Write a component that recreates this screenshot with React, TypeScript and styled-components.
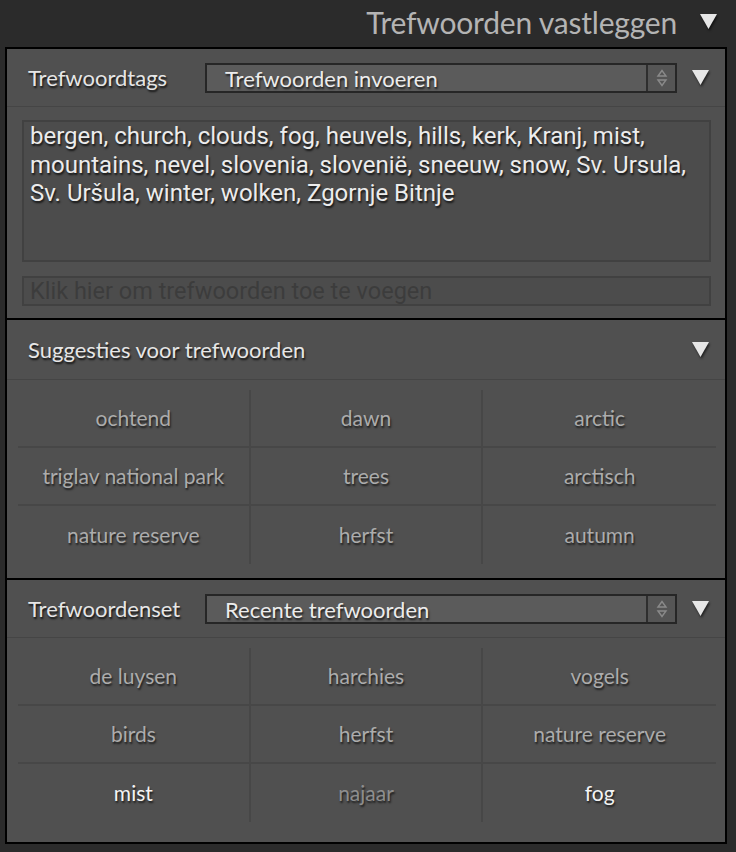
import React from 'react';
import styled, { createGlobalStyle } from 'styled-components';

const GlobalStyle = createGlobalStyle`
  html, body {
    margin: 0;
    padding: 0;
    background: #2b2b2b;
  }
  body {
    font-family: Lato, 'Open Sans', sans-serif;
  }
`;

const Page = styled.div`
  width: 736px;
  min-height: 852px;
  background: #2b2b2b;
  display: flex;
  flex-direction: column;
`;

const TopBar = styled.div`
  flex: none;
  height: 47px;
  display: flex;
  align-items: center;
  justify-content: flex-end;
  gap: 22px;
  padding: 0 18px 4px 0;
  box-sizing: border-box;
`;

const TopTitle = styled.span`
  font-size: 30px;
  color: #b4b4b4;
  letter-spacing: -0.2px;
`;

const Panel = styled.div`
  flex: none;
  margin: 0 9px 0 5px;
  border: 2px solid #000;
  background: #505050;
  display: flex;
  flex-direction: column;
`;

const Section = styled.div<{ $last?: boolean }>`
  border-bottom: ${({ $last }) => ($last ? 'none' : '2px solid #000')};
  display: flex;
  flex-direction: column;
`;

const SectionHeader = styled.div<{ $h: number }>`
  height: ${({ $h }) => $h}px;
  display: flex;
  align-items: center;
  padding: 0 15px 0 21px;
  border-bottom: 1px solid #454545;
  box-sizing: border-box;
`;

const Label = styled.span<{ $w?: number }>`
  font-size: 22px;
  color: #e6e6e6;
  text-shadow: 1px 2px 2px rgba(0, 0, 0, 0.8);
  width: ${({ $w }) => ($w ? `${$w}px` : 'auto')};
  flex: ${({ $w }) => ($w ? 'none' : '1')};
`;

const Select = styled.div`
  flex: 1;
  height: 30px;
  display: flex;
  border: 2px solid #262626;
  background: #5b5b5b;
  box-sizing: border-box;
  margin-right: 14px;
`;

const SelectText = styled.span`
  flex: 1;
  padding-left: 18px;
  font-size: 22px;
  line-height: 28px;
  color: #ececec;
  text-shadow: 1px 2px 2px rgba(0, 0, 0, 0.7);
`;

const Stepper = styled.div`
  width: 27px;
  border-left: 2px solid #2e2e2e;
  background: #555;
  display: flex;
  align-items: center;
  justify-content: center;
`;

const Triangle = styled.svg`
  width: 19px;
  height: 17px;
  flex: none;
  filter: drop-shadow(1px 2px 1px rgba(0, 0, 0, 0.6));
`;

const Body = styled.div`
  padding: 13px 14px 12px 15px;
  display: flex;
  flex-direction: column;
  gap: 14px;
`;

const TagBox = styled.div`
  height: 142px;
  box-sizing: border-box;
  border: 2px solid #414141;
  background: #4c4c4c;
  padding: 0 6px;
  font-family: Roboto, 'Noto Sans', sans-serif;
  font-size: 24px;
  line-height: 28.5px;
  color: #ececec;
  text-shadow: 1px 2px 2px rgba(0, 0, 0, 0.75);
`;

const AddInput = styled.div`
  height: 30px;
  box-sizing: border-box;
  border: 2px solid #414141;
  background: #4c4c4c;
  padding: 0 6px;
  font-family: Roboto, 'Noto Sans', sans-serif;
  font-size: 23.5px;
  line-height: 27px;
  color: #3c3c3c;
  white-space: nowrap;
  overflow: hidden;
`;

const Grid = styled.div<{ $pad: string }>`
  display: grid;
  grid-template-columns: repeat(3, 1fr);
  padding: ${({ $pad }) => $pad};
`;

const Cell = styled.div<{ $col: number; $row: number; $tone: 'dim' | 'normal' | 'bright' }>`
  height: 58px;
  box-sizing: border-box;
  display: flex;
  align-items: center;
  justify-content: center;
  font-size: 21px;
  color: ${({ $tone }) => ($tone === 'bright' ? '#f4f4f4' : $tone === 'dim' ? '#8e8e8e' : '#acacac')};
  text-shadow: 1px 2px 2px rgba(0, 0, 0, 0.65);
  border-right: ${({ $col }) => ($col < 2 ? '2px solid #474747' : 'none')};
  border-bottom: ${({ $row }) => ($row < 2 ? '2px solid #474747' : 'none')};
  padding-bottom: 2px;
`;

const DownTriangle = () => (
  <Triangle viewBox="0 0 19 17">
    <path d="M1 1 L18 1 L9.5 16 Z" fill="#e6e6e6" />
  </Triangle>
);

const StepIcon = () => (
  <svg width="12" height="20" viewBox="0 0 12 20">
    <path d="M2 8 L6 2.5 L10 8 Z" fill="none" stroke="#8a8a8a" strokeWidth="1.4" />
    <path d="M2 12 L6 17.5 L10 12 Z" fill="none" stroke="#8a8a8a" strokeWidth="1.4" />
  </svg>
);

type Tone = 'dim' | 'normal' | 'bright';

const suggestions: [string, Tone][] = [
  ['ochtend', 'normal'],
  ['dawn', 'normal'],
  ['arctic', 'normal'],
  ['triglav national park', 'normal'],
  ['trees', 'normal'],
  ['arctisch', 'normal'],
  ['nature reserve', 'normal'],
  ['herfst', 'normal'],
  ['autumn', 'normal'],
];

const recent: [string, Tone][] = [
  ['de luysen', 'normal'],
  ['harchies', 'normal'],
  ['vogels', 'normal'],
  ['birds', 'normal'],
  ['herfst', 'normal'],
  ['nature reserve', 'normal'],
  ['mist', 'bright'],
  ['najaar', 'dim'],
  ['fog', 'bright'],
];

const KeywordGrid = ({ items, pad }: { items: [string, Tone][]; pad: string }) => (
  <Grid $pad={pad}>
    {items.map(([word, tone], i) => (
      <Cell key={i} $col={i % 3} $row={Math.floor(i / 3)} $tone={tone}>
        {word}
      </Cell>
    ))}
  </Grid>
);

export default function App() {
  return (
    <Page>
      <GlobalStyle />
      <TopBar>
        <TopTitle>Trefwoorden vastleggen</TopTitle>
        <DownTriangle />
      </TopBar>
      <Panel>
        <Section>
          <SectionHeader $h={58}>
            <Label $w={177}>Trefwoordtags</Label>
            <Select>
              <SelectText>Trefwoorden invoeren</SelectText>
              <Stepper>
                <StepIcon />
              </Stepper>
            </Select>
            <DownTriangle />
          </SectionHeader>
          <Body>
            <TagBox>
              bergen, church, clouds, fog, heuvels, hills, kerk, Kranj, mist, mountains, nevel, slovenia,
              slovenië, sneeuw, snow, Sv. Ursula, Sv. Uršula, winter, wolken, Zgornje Bitnje
            </TagBox>
            <AddInput>Klik hier om trefwoorden toe te voegen</AddInput>
          </Body>
        </Section>
        <Section>
          <SectionHeader $h={60}>
            <Label>Suggesties voor trefwoorden</Label>
            <DownTriangle />
          </SectionHeader>
          <KeywordGrid items={suggestions} pad="10px 9px 14px 11px" />
        </Section>
        <Section $last>
          <SectionHeader $h={58}>
            <Label $w={177}>Trefwoordenset</Label>
            <Select>
              <SelectText>Recente trefwoorden</SelectText>
              <Stepper>
                <StepIcon />
              </Stepper>
            </Select>
            <DownTriangle />
          </SectionHeader>
          <KeywordGrid items={recent} pad="10px 9px 20px 11px" />
        </Section>
      </Panel>
    </Page>
  );
}
